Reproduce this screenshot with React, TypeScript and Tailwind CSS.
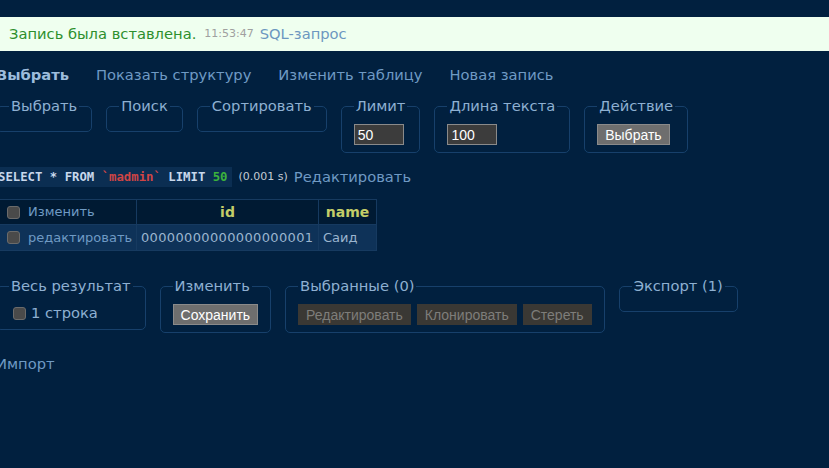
import React from 'react';

const sans = "font-['DejaVu_Sans',Verdana,sans-serif]";
const btnFont = "font-['Liberation_Sans',Arial,sans-serif]";

function Box({ legend, children }: { legend: string; children?: React.ReactNode }) {
  return (
    <fieldset className="shrink-0 rounded-[5px] border border-[#17406b] px-3 pb-[7px]">
      <legend className="px-[2px] text-[#8eb0d2]">{legend}</legend>
      <div className="mt-[9px] flex items-center gap-[6px]">{children}</div>
    </fieldset>
  );
}

function Check({ className = '' }: { className?: string }) {
  return <span className={`inline-block h-[13px] w-[13px] shrink-0 rounded-[3px] border border-[#6b6b6b] bg-[#4a4a4a] ${className}`} />;
}

function Btn({ children, disabled }: { children: React.ReactNode; disabled?: boolean }) {
  return (
    <span
      className={`${btnFont} inline-flex h-[21px] items-center text-[14px] leading-none ${
        disabled ? 'bg-[#3a3834] px-[8px] text-[#7e7d7a]' : 'border border-[#8a8a8a] bg-[#6e6e6e] px-[7px] text-white'
      }`}
    >
      {children}
    </span>
  );
}

function Field({ value }: { value: string }) {
  return (
    <span className={`${btnFont} inline-flex h-[21px] w-[50px] items-center border border-[#8a8a8a] bg-[#3c3c3c] px-[3px] text-[14px] leading-none text-white`}>
      {value}
    </span>
  );
}

export default function App() {
  return (
    <div className={`${sans} min-h-[468px] w-[829px] overflow-hidden bg-[#01203f] pt-[17px] text-[14.7px] leading-[18px]`}>
      <div className="flex h-[34px] items-center bg-[#efffef] pl-[9px]">
        <span className="text-[#2d8f2d]">Запись была вставлена.</span>
        <span className="ml-[8px] text-[11px] text-[#a0a0a0]">11:53:47</span>
        <span className="ml-[6px] text-[#6c97c0]">SQL-запрос</span>
      </div>

      <div className="-ml-[4px]">
        <div className="mt-[15px] flex gap-[27px] text-[#6f9ac4]">
          <span className="font-bold text-[#9dbcdc]">Выбрать</span>
          <span>Показать структуру</span>
          <span>Изменить таблицу</span>
          <span>Новая запись</span>
        </div>

        <div className="mt-[13px] flex items-start gap-[14px]">
          <Box legend="Выбрать" />
          <Box legend="Поиск" />
          <Box legend="Сортировать" />
          <Box legend="Лимит">
            <Field value="50" />
          </Box>
          <Box legend="Длина текста">
            <Field value="100" />
          </Box>
          <Box legend="Действие">
            <Btn>Выбрать</Btn>
          </Box>
        </div>

        <div className="mt-[14px] flex items-center">
          <code className="flex h-[20px] items-center whitespace-pre bg-[#0b2e52] pl-[2px] pr-[4px] font-['DejaVu_Sans_Mono',monospace] text-[12.3px] font-bold text-[#c8d8ec]">
            {'SELECT * FROM '}
            <span className="text-[#d04545]">`madmin`</span>
            {' LIMIT '}
            <span className="text-[#3cb33c]">50</span>
          </code>
          <span className="ml-[7px] text-[11px] text-[#c3cbd4]">(0.001 s)</span>
          <span className="ml-[6px] text-[#6f9ac4]">Редактировать</span>
        </div>

        <table className="mt-[12px] border-collapse text-[13px] leading-[16px]">
          <thead>
            <tr className="h-[25px] bg-[#001a33]">
              <td className="w-[140px] border border-[#163a60] pl-[10px] text-[#6f9ac4]">
                <span className="flex items-center gap-[8px]">
                  <Check />
                  Изменить
                </span>
              </td>
              <th className="w-[182px] border border-[#163a60] text-[14px] text-[#c3cd68]">id</th>
              <th className="w-[58px] border border-[#163a60] px-[6px] text-[14px] text-[#c3cd68]">name</th>
            </tr>
          </thead>
          <tbody>
            <tr className="h-[26px] bg-[#0e3258]">
              <td className="border border-[#163a60] pl-[10px] text-[#6f9ac4]">
                <span className="flex items-center gap-[8px]">
                  <Check />
                  редактировать
                </span>
              </td>
              <td className="border border-[#163a60] px-[4px] tracking-[0.35px] text-[#9bb5cf]">00000000000000000001</td>
              <td className="border border-[#163a60] px-[4px] text-[#9bb5cf]">Саид</td>
            </tr>
          </tbody>
        </table>

        <div className="mt-[26px] flex items-start gap-[14px]">
          <Box legend="Весь результат">
            <span className="flex items-center gap-[5px] text-[#8eb0d2]">
              <Check className="ml-[4px]" />
              1 строка
            </span>
          </Box>
          <Box legend="Изменить">
            <Btn>Сохранить</Btn>
          </Box>
          <Box legend="Выбранные (0)">
            <Btn disabled>Редактировать</Btn>
            <Btn disabled>Клонировать</Btn>
            <Btn disabled>Стереть</Btn>
          </Box>
          <Box legend="Экспорт (1)" />
        </div>

        <div className="mt-[22px] text-[#6f9ac4]">Импорт</div>
      </div>
    </div>
  );
}
